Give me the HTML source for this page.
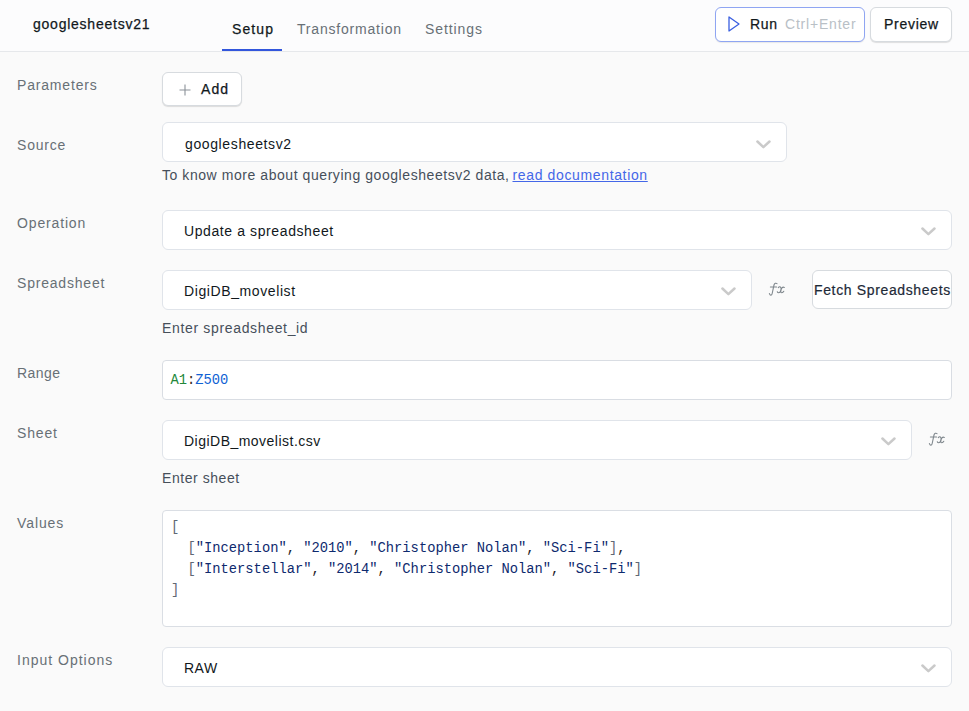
<!DOCTYPE html>
<html><head><meta charset="utf-8">
<style>
*{box-sizing:border-box;margin:0;padding:0}
html,body{width:969px;height:711px;overflow:hidden;background:#fafafa;font-family:"Liberation Sans",sans-serif;font-size:14px;color:#11181c}
.a{position:absolute;white-space:nowrap;line-height:16px}
.hdr{position:absolute;left:0;top:0;width:969px;height:52px;background:#fcfcfd;border-bottom:1px solid #e6e8eb}
.lbl{color:#687076;letter-spacing:0.6px}
.box{position:absolute;background:#fff;border:1px solid #e0e4ea;border-radius:6px}
.txt{letter-spacing:0.6px;color:#11181c}
.help{color:#464f5a;letter-spacing:0.56px}
.med{color:#11181c;-webkit-text-stroke:0.25px #11181c}
.chev{position:absolute;width:16px;height:10px}
.btn{position:absolute;background:#fff;border:1px solid #d7dbdf;border-radius:6px;box-shadow:0 1px 1px rgba(0,0,0,0.12)}
.fx{position:absolute;font-family:"Liberation Serif",serif;font-style:italic;color:#889096;font-size:14px}
.bk{color:#5f6875}.st{color:#0e2a6e}
.mono{font-family:"Liberation Mono",monospace;font-size:13.78px;line-height:21px;color:#1f2328;white-space:pre}
</style></head><body>
<div class="hdr"></div>
<div class="a med" style="left:33px;top:16px;letter-spacing:0.76px">googlesheetsv21</div>
<div class="a med" style="left:232px;top:21px;letter-spacing:1.1px">Setup</div>
<div class="a" style="left:297px;top:21px;color:#687076;letter-spacing:0.8px">Transformation</div>
<div class="a" style="left:425px;top:21px;color:#687076;letter-spacing:0.9px">Settings</div>
<div style="position:absolute;left:222px;top:49px;width:60px;height:2px;background:#3256dc"></div>

<div class="btn" style="left:715px;top:7px;width:150px;height:35px;border-color:#8fa5f2;box-shadow:0 1px 1px rgba(0,0,0,0.08)"></div>
<svg style="position:absolute;left:727px;top:15px" width="14" height="18" viewBox="0 0 14 18"><path d="M2 2 L12 9 L2 16 Z" fill="none" stroke="#3a5fe0" stroke-width="1.3" stroke-linejoin="round"/></svg>
<div class="a med" style="left:750px;top:16px;letter-spacing:0.7px">Run</div>
<div class="a" style="left:785px;top:16px;color:#b9c0c6;letter-spacing:0.8px">Ctrl+Enter</div>
<div class="btn" style="left:870px;top:7px;width:82px;height:35px"></div>
<div class="a med" style="left:884px;top:16px;letter-spacing:0.72px">Preview</div>

<!-- Parameters -->
<div class="a lbl" style="left:17px;top:77px;letter-spacing:0.82px">Parameters</div>
<div class="btn" style="left:162px;top:72px;width:80px;height:34px"></div>
<svg style="position:absolute;left:178px;top:83px" width="14" height="14" viewBox="0 0 14 14"><path d="M7 1.5V12.5M1.5 7H12.5" stroke="#8b9299" stroke-width="1.1"/></svg>
<div class="a med" style="left:201px;top:81px;letter-spacing:1.1px">Add</div>

<!-- Source -->
<div class="a lbl" style="left:17px;top:137px;letter-spacing:0.8px">Source</div>
<div class="box" style="left:162px;top:122px;width:625px;height:40px"></div>
<div class="a txt" style="left:185px;top:136px;letter-spacing:0.62px">googlesheetsv2</div>
<svg class="chev" style="left:755px;top:139px" viewBox="0 0 16 10"><path d="M2.4 2.5L8.4 8.1L14.5 2.5" fill="none" stroke="#cacaca" stroke-width="2.5" stroke-linecap="round" stroke-linejoin="round"/></svg>
<div class="a help" style="left:162px;top:167px">To know more about querying googlesheetsv2 data, <span style="color:#4467e8;text-decoration:underline;margin-left:-1.5px;letter-spacing:0.64px">read documentation</span></div>

<!-- Operation -->
<div class="a lbl" style="left:17px;top:215px;letter-spacing:0.85px">Operation</div>
<div class="box" style="left:162px;top:210px;width:790px;height:40px"></div>
<div class="a txt" style="left:184px;top:223px">Update a spreadsheet</div>
<svg class="chev" style="left:920px;top:226px" viewBox="0 0 16 10"><path d="M2.4 2.5L8.4 8.1L14.5 2.5" fill="none" stroke="#cacaca" stroke-width="2.5" stroke-linecap="round" stroke-linejoin="round"/></svg>

<!-- Spreadsheet -->
<div class="a lbl" style="left:17px;top:275px;letter-spacing:0.8px">Spreadsheet</div>
<div class="box" style="left:162px;top:270px;width:590px;height:40px"></div>
<div class="a txt" style="left:184px;top:283px">DigiDB_movelist</div>
<svg class="chev" style="left:720px;top:286px" viewBox="0 0 16 10"><path d="M2.4 2.5L8.4 8.1L14.5 2.5" fill="none" stroke="#cacaca" stroke-width="2.5" stroke-linecap="round" stroke-linejoin="round"/></svg>
<svg style="position:absolute;left:765px;top:280px" width="24" height="18" viewBox="0 0 24 18"><path d="M12 3.6C11 2.8 9.5 3.2 9 5L7.3 13C7 15.5 5.3 16 4.4 13.6M5.4 7H11.6M13.3 7.6C13.8 6.9 14.6 6.7 15.3 6.9C16.2 7.3 16.3 8.3 16 9.4L15.6 10.9C15.3 12 14.6 12.7 13.7 12.7C13 12.7 12.5 12.3 12.3 11.8M19.3 7.4C18.6 7 17.6 7.1 17 7.8C16.5 8.4 16.2 9.3 16 10.2L15.8 11.1C15.6 12.1 16 12.7 16.8 12.7C17.6 12.7 18.3 12.2 18.8 11.3" fill="none" stroke="#7e868c" stroke-width="1.1" stroke-linecap="round"/></svg>
<div class="btn" style="left:812px;top:270px;width:140px;height:39px;box-shadow:none"></div>
<div class="a" style="left:814px;top:282px;letter-spacing:0.64px;color:#1e2a38;-webkit-text-stroke:0.2px #1e2a38">Fetch Spreadsheets</div>
<div class="a help" style="left:162px;top:320px;letter-spacing:0.66px">Enter spreadsheet_id</div>

<!-- Range -->
<div class="a lbl" style="left:17px;top:365px;letter-spacing:0.42px">Range</div>
<div class="box" style="left:162px;top:360px;width:790px;height:40px;border-radius:4px;border-color:#d9dde3"></div>
<div class="a mono" style="left:170.5px;top:370px"><span style="color:#23873a">A1</span><span style="color:#3a2a20">:</span><span style="color:#1062d4">Z500</span></div>

<!-- Sheet -->
<div class="a lbl" style="left:17px;top:425px;letter-spacing:0.85px">Sheet</div>
<div class="box" style="left:162px;top:420px;width:750px;height:40px"></div>
<div class="a txt" style="left:184px;top:433px;letter-spacing:0.48px">DigiDB_movelist.csv</div>
<svg class="chev" style="left:880px;top:436px" viewBox="0 0 16 10"><path d="M2.4 2.5L8.4 8.1L14.5 2.5" fill="none" stroke="#cacaca" stroke-width="2.5" stroke-linecap="round" stroke-linejoin="round"/></svg>
<svg style="position:absolute;left:925px;top:430px" width="24" height="18" viewBox="0 0 24 18"><path d="M12 3.6C11 2.8 9.5 3.2 9 5L7.3 13C7 15.5 5.3 16 4.4 13.6M5.4 7H11.6M13.3 7.6C13.8 6.9 14.6 6.7 15.3 6.9C16.2 7.3 16.3 8.3 16 9.4L15.6 10.9C15.3 12 14.6 12.7 13.7 12.7C13 12.7 12.5 12.3 12.3 11.8M19.3 7.4C18.6 7 17.6 7.1 17 7.8C16.5 8.4 16.2 9.3 16 10.2L15.8 11.1C15.6 12.1 16 12.7 16.8 12.7C17.6 12.7 18.3 12.2 18.8 11.3" fill="none" stroke="#7e868c" stroke-width="1.1" stroke-linecap="round"/></svg>
<div class="a help" style="left:162px;top:470px">Enter sheet</div>

<!-- Values -->
<div class="a lbl" style="left:17px;top:515px;letter-spacing:0.9px">Values</div>
<div class="box" style="left:162px;top:510px;width:790px;height:117px;border-radius:4px;border-color:#dadee4"></div>
<div class="a mono" style="left:171px;top:517px"><span class="bk">[</span>
  <span class="bk">[</span><span class="st">"Inception"</span>, <span class="st">"2010"</span>, <span class="st">"Christopher Nolan"</span>, <span class="st">"Sci-Fi"</span><span class="bk">]</span>,
  <span class="bk">[</span><span class="st">"Interstellar"</span>, <span class="st">"2014"</span>, <span class="st">"Christopher Nolan"</span>, <span class="st">"Sci-Fi"</span><span class="bk">]</span>
<span class="bk">]</span></div>

<!-- Input Options -->
<div class="a lbl" style="left:17px;top:652px;letter-spacing:1.0px">Input Options</div>
<div class="box" style="left:162px;top:647px;width:790px;height:40px"></div>
<div class="a txt" style="left:184px;top:660px;letter-spacing:0.5px">RAW</div>
<svg class="chev" style="left:920px;top:663px" viewBox="0 0 16 10"><path d="M2.4 2.5L8.4 8.1L14.5 2.5" fill="none" stroke="#cacaca" stroke-width="2.5" stroke-linecap="round" stroke-linejoin="round"/></svg>
</body></html>
